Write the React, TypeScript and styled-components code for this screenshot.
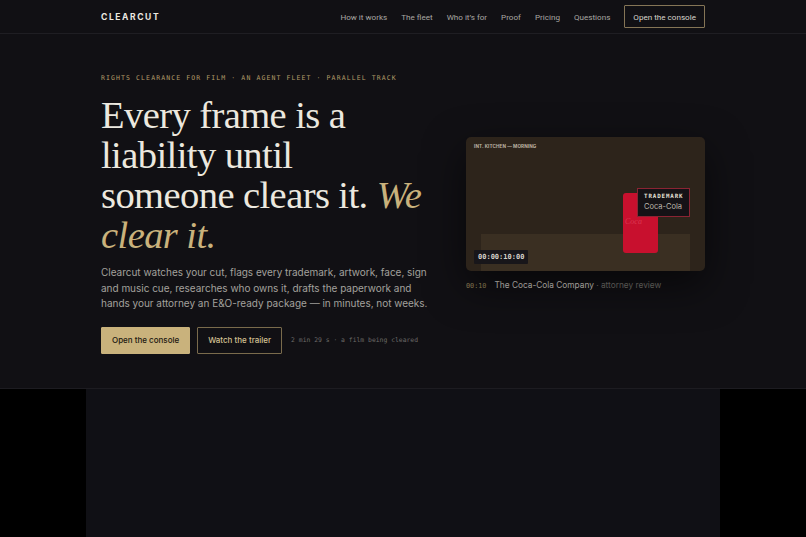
import React from "react";
import styled, { createGlobalStyle } from "styled-components";

const Global = createGlobalStyle`
  html, body { margin: 0; padding: 0; background: #000; }
  body { font-family: Inter, "Noto Sans", sans-serif; color: #e8e4dc; }
  * { box-sizing: border-box; }
`;

const Page = styled.div`
  width: 806px;
  min-height: 100vh;
  background: #000;
  display: flex;
  flex-direction: column;
`;

const Hero = styled.section`
  background: #111014;
  border-bottom: 1px solid #1d1c21;
`;

const Nav = styled.nav`
  height: 34px;
  border-bottom: 1px solid #1f1e23;
  display: flex;
  align-items: center;
  justify-content: space-between;
  padding: 0 101px;
`;

const Logo = styled.div`
  font-family: Inter, sans-serif;
  font-weight: 700;
  font-size: 8.5px;
  letter-spacing: 1.6px;
  color: #ece8e0;
`;

const Links = styled.div`
  display: flex;
  align-items: center;
  gap: 14px;
`;

const NavLink = styled.a`
  font-family: Roboto, Inter, sans-serif;
  font-size: 8.1px;
  color: #a9a7a3;
  text-decoration: none;
  white-space: nowrap;
`;

const NavButton = styled.a`
  font-family: Roboto, Inter, sans-serif;
  font-size: 8.1px;
  color: #d8d4cc;
  border: 1px solid #857556;
  padding: 0 8px;
  border-radius: 1px;
  height: 23px;
  display: flex;
  align-items: center;
  white-space: nowrap;
`;

const HeroBody = styled.div`
  display: flex;
  justify-content: space-between;
  align-items: center;
  padding: 40px 101px 34px;
`;

const Left = styled.div`
  width: 340px;
  display: flex;
  flex-direction: column;
`;

const Eyebrow = styled.div`
  font-family: "DejaVu Sans Mono", "Liberation Mono", monospace;
  font-size: 6.5px;
  letter-spacing: 1.1px;
  color: #b29c68;
  margin-bottom: 13px;
  white-space: nowrap;
`;

const Headline = styled.h1`
  font-family: "Liberation Serif", serif;
  font-weight: 400;
  font-size: 38.6px;
  line-height: 40px;
  letter-spacing: -0.6px;
  color: #ece8df;
  margin: 0 0 10px;
  white-space: nowrap;
`;

const Accent = styled.em`
  color: #c9b27c;
  font-style: italic;
`;

const Lead = styled.p`
  font-size: 10px;
  line-height: 15.5px;
  letter-spacing: -0.02px;
  color: #a3a19d;
  margin: 0 0 15px;
  width: 330px;
`;

const Actions = styled.div`
  display: flex;
  align-items: center;
  gap: 7px;
`;

const Button = styled.a<{ $primary?: boolean }>`
  height: 27px;
  display: flex;
  align-items: center;
  padding: 0 10px;
  font-size: 8px;
  font-weight: 500;
  white-space: nowrap;
  border-radius: 1px;
  color: ${(p) => (p.$primary ? "#1b1710" : "#d4c193")};
  background: ${(p) => (p.$primary ? "#c9b27c" : "transparent")};
  border: 1px solid ${(p) => (p.$primary ? "#c9b27c" : "#7a6b4c")};
`;

const Note = styled.span`
  margin-left: 2px;
  font-family: "DejaVu Sans Mono", monospace;
  font-size: 6.4px;
  color: #6d6b68;
  white-space: nowrap;
`;

const Right = styled.div`
  width: 239px;
  display: flex;
  flex-direction: column;
  gap: 9px;
`;

const Frame = styled.div`
  position: relative;
  height: 134px;
  border-radius: 5px;
  background: #2d241b;
  box-shadow: 0 14px 40px rgba(0, 0, 0, 0.55);
  overflow: hidden;
  display: flex;
  flex-direction: column;
  justify-content: space-between;
  padding: 7px 8px 0;
`;

const Slate = styled.div`
  font-size: 4.6px;
  font-weight: 700;
  color: #bdb3a3;
  letter-spacing: 0.1px;
`;

const Counter = styled.div`
  height: 37px;
  margin: 0 7px 0 7px;
  background: #3a2f22;
`;

const Can = styled.div`
  position: absolute;
  left: 157px;
  top: 56px;
  width: 35px;
  height: 60px;
  border-radius: 3px;
  background: #c8102e;
  display: flex;
  align-items: center;
  padding-left: 2px;
  padding-bottom: 4px;
`;

const CanScript = styled.span`
  font-family: "Liberation Serif", serif;
  font-style: italic;
  font-size: 8px;
  color: #e0405a;
  opacity: 0.8;
`;

const Tag = styled.div`
  position: absolute;
  left: 171px;
  top: 51px;
  width: 53px;
  height: 29px;
  background: #151216;
  border: 1px solid #8a2433;
  padding: 4px 6px;
  display: flex;
  flex-direction: column;
  gap: 3px;
`;

const TagLabel = styled.span`
  font-family: "DejaVu Sans Mono", monospace;
  font-size: 5.8px;
  font-weight: 700;
  letter-spacing: 0.9px;
  color: #e6e1d8;
`;

const TagValue = styled.span`
  font-size: 7.5px;
  color: #bdb7ad;
`;

const Timecode = styled.div`
  position: absolute;
  left: 8px;
  top: 113px;
  height: 14px;
  padding: 0 4px;
  background: #18161a;
  border-radius: 1px;
  display: flex;
  align-items: center;
  font-family: "DejaVu Sans Mono", monospace;
  font-size: 7px;
  font-weight: 700;
  color: #d6d2ca;
`;

const Caption = styled.div`
  display: flex;
  align-items: baseline;
  gap: 8px;
  font-size: 8.3px;
`;

const CapTime = styled.span`
  font-family: "DejaVu Sans Mono", monospace;
  font-size: 6.8px;
  color: #9c8a5e;
`;

const CapName = styled.span`
  color: #d7d3cc;
`;

const CapSub = styled.span`
  color: #77746f;
`;

const Below = styled.section`
  flex: 1;
  width: 634px;
  min-height: 150px;
  margin: 0 auto;
  background: #101015;
`;

export default function App() {
  return (
    <Page>
      <Global />
      <Hero>
        <Nav>
          <Logo>CLEARCUT</Logo>
          <Links>
            <NavLink>How it works</NavLink>
            <NavLink>The fleet</NavLink>
            <NavLink>Who it’s for</NavLink>
            <NavLink>Proof</NavLink>
            <NavLink>Pricing</NavLink>
            <NavLink>Questions</NavLink>
            <NavButton>Open the console</NavButton>
          </Links>
        </Nav>
        <HeroBody>
          <Left>
            <Eyebrow>RIGHTS CLEARANCE FOR FILM · AN AGENT FLEET · PARALLEL TRACK</Eyebrow>
            <Headline>
              Every frame is a
              <br />
              liability until
              <br />
              someone clears it. <Accent>We</Accent>
              <br />
              <Accent>clear it.</Accent>
            </Headline>
            <Lead>
              Clearcut watches your cut, flags every trademark, artwork, face, sign and music cue,
              researches who owns it, drafts the paperwork and hands your attorney an E&amp;O-ready
              package — in minutes, not weeks.
            </Lead>
            <Actions>
              <Button $primary>Open the console</Button>
              <Button>Watch the trailer</Button>
              <Note>2 min 29 s · a film being cleared</Note>
            </Actions>
          </Left>
          <Right>
            <Frame>
              <Slate>INT. KITCHEN — MORNING</Slate>
              <Counter />
              <Can>
                <CanScript>Coca</CanScript>
              </Can>
              <Tag>
                <TagLabel>TRADEMARK</TagLabel>
                <TagValue>Coca-Cola</TagValue>
              </Tag>
              <Timecode>00:00:10:00</Timecode>
            </Frame>
            <Caption>
              <CapTime>00:10</CapTime>
              <span>
                <CapName>The Coca-Cola Company</CapName>
                <CapSub> · attorney review</CapSub>
              </span>
            </Caption>
          </Right>
        </HeroBody>
      </Hero>
      <Below />
    </Page>
  );
}
